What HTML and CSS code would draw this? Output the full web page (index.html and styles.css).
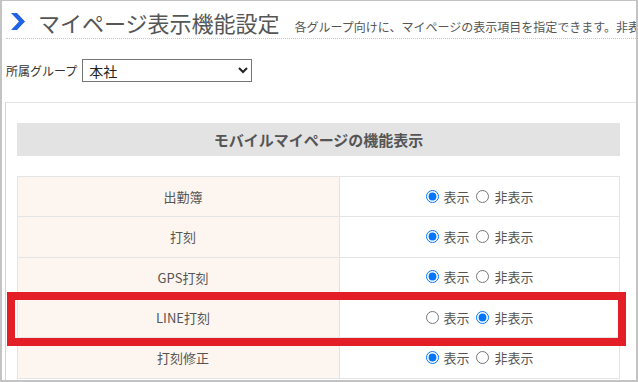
FILE: index.html
```html
<!DOCTYPE html>
<html lang="ja">
<head>
    <meta charset="UTF-8">
    <meta name="viewport" content="width=device-width, initial-scale=1.0">
    <title>マイページ表示機能設定</title>
    <link rel="stylesheet" href="styles.css">
</head>
<body>
    <div class="frame">
        <div class="page-head">
            <svg class="head-icon" width="14" height="17" viewBox="0 0 14 17">
                <polygon points="0,0 6,0 14,8.5 6,17 0,17 8,8.5" fill="#2063e6"/>
            </svg>
            <h1 class="page-title">マイページ表示機能設定</h1>
            <p class="page-desc">各グループ向けに、マイページの表示項目を指定できます。非表示</p>
        </div>

        <div class="group-row">
            <label for="groupSelect">所属グループ</label>
            <select id="groupSelect">
                <option>本社</option>
                <option>営業部</option>
                <option>開発部</option>
            </select>
        </div>

        <div class="panel">
            <div class="panel-main">
                <div class="section-title">モバイルマイページの機能表示</div>
                <table class="setting-table">
                    <tr>
                        <td class="item-name">出勤簿</td>
                        <td class="item-value">
                            <label><input type="radio" name="r1" checked>表示</label>
                            <label><input type="radio" name="r1">非表示</label>
                        </td>
                    </tr>
                    <tr>
                        <td class="item-name">打刻</td>
                        <td class="item-value">
                            <label><input type="radio" name="r2" checked>表示</label>
                            <label><input type="radio" name="r2">非表示</label>
                        </td>
                    </tr>
                    <tr>
                        <td class="item-name">GPS打刻</td>
                        <td class="item-value">
                            <label><input type="radio" name="r3" checked>表示</label>
                            <label><input type="radio" name="r3">非表示</label>
                        </td>
                    </tr>
                    <tr>
                        <td class="item-name">LINE打刻</td>
                        <td class="item-value">
                            <label><input type="radio" name="r4">表示</label>
                            <label><input type="radio" name="r4" checked>非表示</label>
                        </td>
                    </tr>
                    <tr>
                        <td class="item-name">打刻修正</td>
                        <td class="item-value">
                            <label><input type="radio" name="r5" checked>表示</label>
                            <label><input type="radio" name="r5">非表示</label>
                        </td>
                    </tr>
                </table>
            </div>
            <div class="panel-side"></div>
        </div>

        <div class="highlight"></div>
    </div>
</body>
</html>
```

FILE: styles.css
```css
body {
    margin: 0;
    background-color: #ffffff;
    font-family: "Noto Sans CJK JP", "Noto Sans", sans-serif;
    color: #555;
}

.frame {
    position: relative;
    box-sizing: border-box;
    width: 638px;
    height: 382px;
    border: 2px solid #c3c3c3;
    border-top-width: 1px;
    overflow: hidden;
}

/* page header */
.page-head {
    display: flex;
    align-items: flex-start;
    height: 37px;
    margin-left: 4px;
    border-bottom: 1px dotted #c8c8c8;
}

.head-icon {
    flex-shrink: 0;
    margin: 12px 0 0 5px;
}

.page-title {
    flex-shrink: 0;
    margin: 8px 0 0 13px;
    font-size: 22px;
    font-weight: normal;
    line-height: 26px;
    color: #555;
}

.page-desc {
    flex-shrink: 0;
    margin: 18px 0 0 15px;
    font-size: 12px;
    line-height: 16px;
    white-space: nowrap;
    color: #555;
}

/* group select */
.group-row {
    display: flex;
    align-items: center;
    gap: 5px;
    margin: 20px 0 0 4px;
}

.group-row label {
    font-size: 12px;
    color: #333;
}

.group-row select {
    width: 170px;
    height: 23px;
    padding: 0 2px;
    border: 1px solid #767676;
    border-radius: 0;
    background-color: #fff;
    font-family: inherit;
    font-size: 14px;
    color: #222;
}

/* panel */
.panel {
    display: flex;
    height: 300px;
    margin: 20px 0 0 3px;
    border-top: 1px solid #e4e4e4;
    border-left: 1px solid #d4d4d4;
}

.panel-main {
    flex-shrink: 0;
    width: 613px;
    padding: 20px 10px 0 11px;
    border-right: 1px solid #e4e4e4;
}

.panel-side {
    flex: 1;
}

.section-title {
    width: 603px;
    height: 33px;
    line-height: 33px;
    background-color: #e3e3e3;
    text-align: center;
    font-size: 15px;
    font-weight: bold;
    color: #555;
}

.setting-table {
    width: 603px;
    margin-top: 20px;
    border-collapse: collapse;
    font-size: 13px;
}

.setting-table td {
    height: 39.34px;
    padding: 0;
    border: 1px solid #e4e4e4;
    vertical-align: middle;
}

.item-name {
    width: 312px;
    padding-left: 9px !important;
    background-color: #fdf5ef;
    text-align: center;
}

.item-value {
    text-align: center;
}

.item-value label {
    display: inline-flex;
    align-items: center;
    gap: 5px;
    margin: 0 2px;
}

.item-value input {
    width: 13px;
    height: 13px;
    margin: 0;
}

/* red callout over the LINE row */
.highlight {
    position: absolute;
    left: 5px;
    top: 291px;
    box-sizing: border-box;
    width: 619px;
    height: 54px;
    border: 8px solid #e41e26;
}
```
